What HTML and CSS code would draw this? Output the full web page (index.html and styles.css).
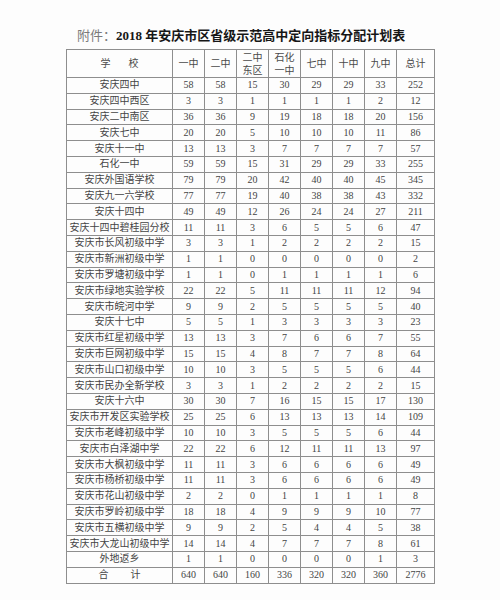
FILE: index.html
```html
<!DOCTYPE html>
<html lang="zh-CN">
<head>
<meta charset="utf-8">
<title>2018年安庆市区省级示范高中定向指标分配计划表</title>
<link rel="stylesheet" href="styles.css">
</head>
<body>
<div class="page">
  <h1 class="title"><span class="prefix">附件：</span>2018 年安庆市区省级示范高中定向指标分配计划表</h1>
  <table class="plan">
    <colgroup>
      <col class="c-school">
      <col class="c-num"><col class="c-num"><col class="c-num"><col class="c-num">
      <col class="c-num"><col class="c-num"><col class="c-num">
      <col class="c-total">
    </colgroup>
    <thead>
      <tr>
        <th><span class="spread"><span>学</span><span>校</span></span></th>
        <th>一中</th>
        <th>二中</th>
        <th class="two">二中<br>东区</th>
        <th class="two">石化<br>一中</th>
        <th>七中</th>
        <th>十中</th>
        <th>九中</th>
        <th>总计</th>
      </tr>
    </thead>
    <tbody>
      <tr><td>安庆四中</td><td>58</td><td>58</td><td>15</td><td>30</td><td>29</td><td>29</td><td>33</td><td>252</td></tr>
      <tr><td>安庆四中西区</td><td>3</td><td>3</td><td>1</td><td>1</td><td>1</td><td>1</td><td>2</td><td>12</td></tr>
      <tr><td>安庆二中南区</td><td>36</td><td>36</td><td>9</td><td>19</td><td>18</td><td>18</td><td>20</td><td>156</td></tr>
      <tr><td>安庆七中</td><td>20</td><td>20</td><td>5</td><td>10</td><td>10</td><td>10</td><td>11</td><td>86</td></tr>
      <tr><td>安庆十一中</td><td>13</td><td>13</td><td>3</td><td>7</td><td>7</td><td>7</td><td>7</td><td>57</td></tr>
      <tr><td>石化一中</td><td>59</td><td>59</td><td>15</td><td>31</td><td>29</td><td>29</td><td>33</td><td>255</td></tr>
      <tr><td>安庆外国语学校</td><td>79</td><td>79</td><td>20</td><td>42</td><td>40</td><td>40</td><td>45</td><td>345</td></tr>
      <tr><td>安庆九一六学校</td><td>77</td><td>77</td><td>19</td><td>40</td><td>38</td><td>38</td><td>43</td><td>332</td></tr>
      <tr><td>安庆十四中</td><td>49</td><td>49</td><td>12</td><td>26</td><td>24</td><td>24</td><td>27</td><td>211</td></tr>
      <tr><td>安庆十四中碧桂园分校</td><td>11</td><td>11</td><td>3</td><td>6</td><td>5</td><td>5</td><td>6</td><td>47</td></tr>
      <tr><td>安庆市长风初级中学</td><td>3</td><td>3</td><td>1</td><td>2</td><td>2</td><td>2</td><td>2</td><td>15</td></tr>
      <tr><td>安庆市新洲初级中学</td><td>1</td><td>1</td><td>0</td><td>0</td><td>0</td><td>0</td><td>0</td><td>2</td></tr>
      <tr><td>安庆市罗塘初级中学</td><td>1</td><td>1</td><td>0</td><td>1</td><td>1</td><td>1</td><td>1</td><td>6</td></tr>
      <tr><td>安庆市绿地实验学校</td><td>22</td><td>22</td><td>5</td><td>11</td><td>11</td><td>11</td><td>12</td><td>94</td></tr>
      <tr><td>安庆市皖河中学</td><td>9</td><td>9</td><td>2</td><td>5</td><td>5</td><td>5</td><td>5</td><td>40</td></tr>
      <tr><td>安庆十七中</td><td>5</td><td>5</td><td>1</td><td>3</td><td>3</td><td>3</td><td>3</td><td>23</td></tr>
      <tr><td>安庆市红星初级中学</td><td>13</td><td>13</td><td>3</td><td>7</td><td>6</td><td>6</td><td>7</td><td>55</td></tr>
      <tr><td>安庆市巨网初级中学</td><td>15</td><td>15</td><td>4</td><td>8</td><td>7</td><td>7</td><td>8</td><td>64</td></tr>
      <tr><td>安庆市山口初级中学</td><td>10</td><td>10</td><td>3</td><td>5</td><td>5</td><td>5</td><td>6</td><td>44</td></tr>
      <tr><td>安庆市民办全新学校</td><td>3</td><td>3</td><td>1</td><td>2</td><td>2</td><td>2</td><td>2</td><td>15</td></tr>
      <tr><td>安庆十六中</td><td>30</td><td>30</td><td>7</td><td>16</td><td>15</td><td>15</td><td>17</td><td>130</td></tr>
      <tr><td>安庆市开发区实验学校</td><td>25</td><td>25</td><td>6</td><td>13</td><td>13</td><td>13</td><td>14</td><td>109</td></tr>
      <tr><td>安庆市老峰初级中学</td><td>10</td><td>10</td><td>3</td><td>5</td><td>5</td><td>5</td><td>6</td><td>44</td></tr>
      <tr><td>安庆市白泽湖中学</td><td>22</td><td>22</td><td>6</td><td>12</td><td>11</td><td>11</td><td>13</td><td>97</td></tr>
      <tr><td>安庆市大枫初级中学</td><td>11</td><td>11</td><td>3</td><td>6</td><td>6</td><td>6</td><td>6</td><td>49</td></tr>
      <tr><td>安庆市杨桥初级中学</td><td>11</td><td>11</td><td>3</td><td>6</td><td>6</td><td>6</td><td>6</td><td>49</td></tr>
      <tr><td>安庆市花山初级中学</td><td>2</td><td>2</td><td>0</td><td>1</td><td>1</td><td>1</td><td>1</td><td>8</td></tr>
      <tr><td>安庆市罗岭初级中学</td><td>18</td><td>18</td><td>4</td><td>9</td><td>9</td><td>9</td><td>10</td><td>77</td></tr>
      <tr><td>安庆市五横初级中学</td><td>9</td><td>9</td><td>2</td><td>5</td><td>4</td><td>4</td><td>5</td><td>38</td></tr>
      <tr><td>安庆市大龙山初级中学</td><td>14</td><td>14</td><td>4</td><td>7</td><td>7</td><td>7</td><td>8</td><td>61</td></tr>
      <tr><td>外地返乡</td><td>1</td><td>1</td><td>0</td><td>0</td><td>0</td><td>0</td><td>1</td><td>3</td></tr>
      <tr><td><span class="spread wide"><span>合</span><span>计</span></span></td><td>640</td><td>640</td><td>160</td><td>336</td><td>320</td><td>320</td><td>360</td><td>2776</td></tr>
    </tbody>
  </table>
</div>
</body>
</html>
```

FILE: styles.css
```css
html, body {
  margin: 0;
  padding: 0;
  background: #fdfdfd;
}

.page {
  width: 500px;
  height: 600px;
  padding-top: 29px;
  box-sizing: border-box;
  font-family: "Liberation Serif", "Noto Sans CJK SC", serif;
  color: #444444;
}

.title {
  margin: 0 0 7px 77px;
  font-size: 13px;
  line-height: 13px;
  font-weight: bold;
  color: #161616;
  white-space: nowrap;
}

.title .prefix {
  font-weight: normal;
  color: #7a7a7a;
}

.plan {
  margin-left: 66px;
  width: 368px;
  border-collapse: collapse;
  table-layout: fixed;
  font-size: 10px;
}

.c-school { width: 106px; }
.c-num { width: 32px; }
.c-total { width: 38px; }

.plan th,
.plan td {
  border: 1px solid #8e8e8e;
  padding: 0;
  text-align: center;
  vertical-align: middle;
  white-space: nowrap;
  overflow: hidden;
}

.plan th {
  height: 27px;
  font-weight: normal;
  color: #4a4a4a;
  line-height: 12px;
}

.plan th.two {
  line-height: 13px;
}

.plan td {
  height: 14.8px;
  line-height: 12px;
}

.spread {
  display: inline-flex;
  gap: 18px;
}

.spread.wide {
  gap: 22px;
}
```
